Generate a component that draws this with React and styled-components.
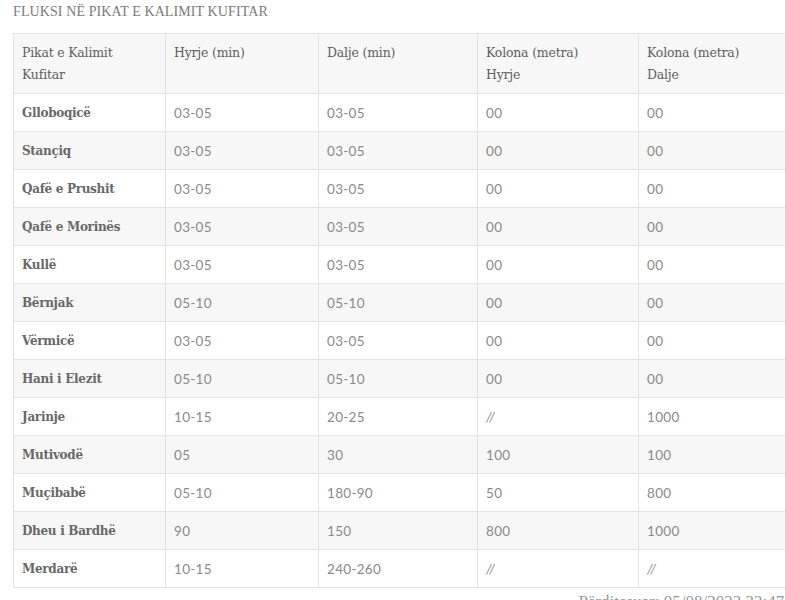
import React from 'react';
import styled, { createGlobalStyle } from 'styled-components';

const Global = createGlobalStyle`
  html, body {
    margin: 0;
    padding: 0;
    background: #fff;
    overflow: hidden;
  }
`;

const Page = styled.div`
  width: 806px;
  padding: 0 0 0 13px;
  box-sizing: border-box;
`;

const Title = styled.h3`
  margin: 0;
  padding-top: 4px;
  height: 29px;
  font-family: 'Liberation Serif', serif;
  font-weight: normal;
  font-size: 14px;
  line-height: 16px;
  color: #7b7b7b;
  letter-spacing: 0.1px;
`;

const Table = styled.table`
  width: 785px;
  border-collapse: collapse;
  table-layout: fixed;
  border: 1px solid #e3e3e3;
`;

const Head = styled.th`
  text-align: left;
  vertical-align: top;
  padding: 8px 8px 7px 8px;
  height: 44px;
  background: #f7f7f7;
  border: 1px solid #e3e3e3;
  font-family: 'DejaVu Serif', serif;
  font-weight: normal;
  font-size: 12.5px;
  line-height: 22px;
  color: #5e5e5e;
  letter-spacing: -0.2px;
`;

const Row = styled.tr`
  background: ${p => (p.$odd ? '#f7f7f7' : '#fff')};
`;

const Cell = styled.td`
  padding: 0 8px;
  height: 37px;
  border: 1px solid #e3e3e3;
  font-family: ${p => (p.$name ? "'DejaVu Serif', serif" : "'Lato', sans-serif")};
  font-weight: ${p => (p.$name ? 'bold' : 'normal')};
  font-size: ${p => (p.$name ? '12px' : '13.5px')};
  letter-spacing: ${p => (p.$name ? '-0.3px' : '0.3px')};
  color: ${p => (p.$name ? '#686868' : '#8a8a8a')};
  font-style: ${p => (p.$slash ? 'italic' : 'normal')};
  white-space: nowrap;
`;

const Updated = styled.div`
  text-align: right;
  padding-top: 4px;
  font-family: 'Liberation Serif', serif;
  font-size: 17px;
  color: #9a9a9a;
  white-space: nowrap;
`;

const widths = [152, 153, 159, 161, 160];

const rows = [
  ['Glloboqicë', '03-05', '03-05', '00', '00'],
  ['Stançiq', '03-05', '03-05', '00', '00'],
  ['Qafë e Prushit', '03-05', '03-05', '00', '00'],
  ['Qafë e Morinës', '03-05', '03-05', '00', '00'],
  ['Kullë', '03-05', '03-05', '00', '00'],
  ['Bërnjak', '05-10', '05-10', '00', '00'],
  ['Vërmicë', '03-05', '03-05', '00', '00'],
  ['Hani i Elezit', '05-10', '05-10', '00', '00'],
  ['Jarinje', '10-15', '20-25', '//', '1000'],
  ['Mutivodë', '05', '30', '100', '100'],
  ['Muçibabë', '05-10', '180-90', '50', '800'],
  ['Dheu i Bardhë', '90', '150', '800', '1000'],
  ['Merdarë', '10-15', '240-260', '//', '//'],
];

export default function App() {
  return (
    <Page>
      <Global />
      <Title>FLUKSI NË PIKAT E KALIMIT KUFITAR</Title>
      <Table>
        <colgroup>
          {widths.map((w, i) => <col key={i} style={{ width: w }} />)}
        </colgroup>
        <thead>
          <tr>
            <Head>Pikat e Kalimit<br />Kufitar</Head>
            <Head>Hyrje (min)</Head>
            <Head>Dalje (min)</Head>
            <Head>Kolona (metra)<br />Hyrje</Head>
            <Head>Kolona (metra)<br />Dalje</Head>
          </tr>
        </thead>
        <tbody>
          {rows.map((r, i) => (
            <Row key={r[0]} $odd={i % 2 === 1}>
              {r.map((c, j) => (
                <Cell key={j} $name={j === 0} $slash={c === '//'}>{c}</Cell>
              ))}
            </Row>
          ))}
        </tbody>
      </Table>
      <Updated>Përditesuar: 05/08/2022 22:47:10</Updated>
    </Page>
  );
}
